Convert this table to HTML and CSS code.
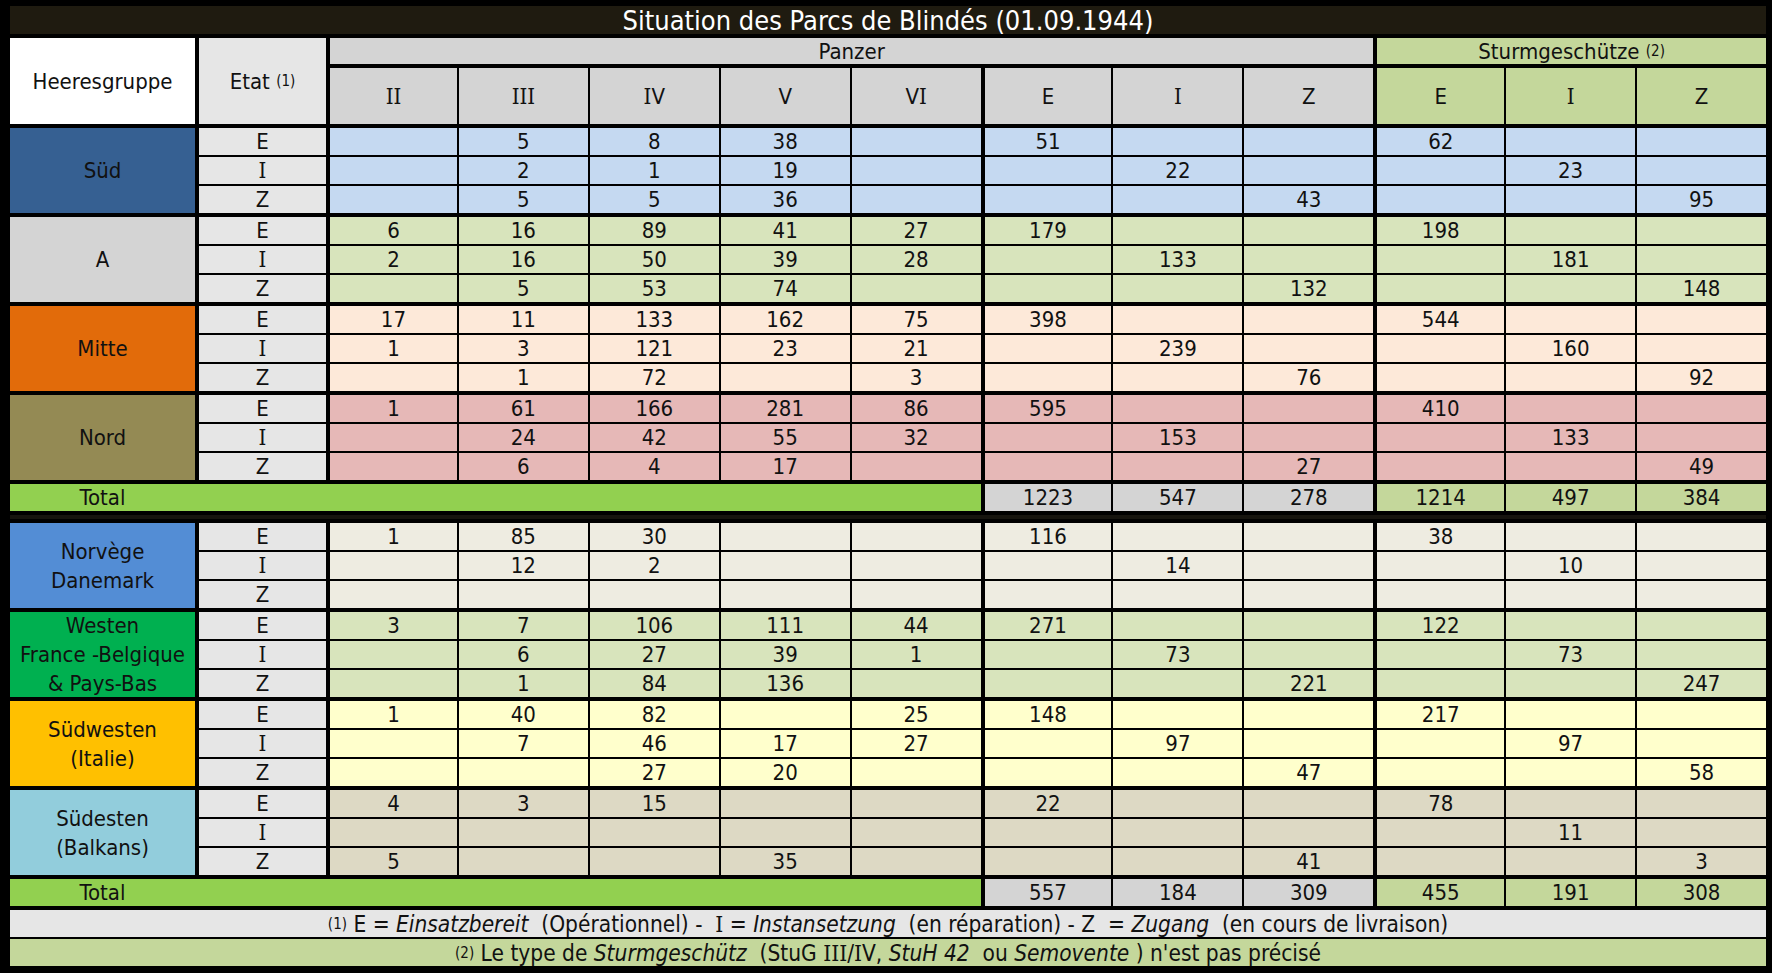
FILE: index.html
```html
<!DOCTYPE html>
<html lang="fr">
<head>
<meta charset="utf-8">
<title>Situation des Parcs de Blindés (01.09.1944)</title>
<link rel="stylesheet" href="styles.css">
</head>
<body>
<div class="sheet">
  <div class="title">Situation des Parcs de Blindés (01.09.1944)</div>

  <div class="grid head">
    <div class="hg">Heeresgruppe</div>
    <div class="etat-h tk">Etat&nbsp;<sup>(1)</sup></div>
    <div class="band-p tk">Panzer</div>
    <div class="band-s tk">Sturmgeschütze&nbsp;<sup>(2)</sup></div>
    <div class="sub-p tk"><span class="r">II</span></div>
    <div class="sub-p"><span class="r">III</span></div>
    <div class="sub-p"><span class="r">I</span>V</div>
    <div class="sub-p">V</div>
    <div class="sub-p">V<span class="r">I</span></div>
    <div class="sub-p tk">E</div>
    <div class="sub-p"><span class="r">I</span></div>
    <div class="sub-p">Z</div>
    <div class="sub-s tk">E</div>
    <div class="sub-s"><span class="r">I</span></div>
    <div class="sub-s">Z</div>
  </div>

  <div class="grid grp sud">
    <div class="lab">Süd</div>
    <div>E</div><div></div><div>5</div><div>8</div><div>38</div><div></div><div>51</div><div></div><div></div><div>62</div><div></div><div></div>
    <div class="r">I</div><div></div><div>2</div><div>1</div><div>19</div><div></div><div></div><div>22</div><div></div><div></div><div>23</div><div></div>
    <div>Z</div><div></div><div>5</div><div>5</div><div>36</div><div></div><div></div><div></div><div>43</div><div></div><div></div><div>95</div>
  </div>

  <div class="grid grp ga">
    <div class="lab">A</div>
    <div>E</div><div>6</div><div>16</div><div>89</div><div>41</div><div>27</div><div>179</div><div></div><div></div><div>198</div><div></div><div></div>
    <div class="r">I</div><div>2</div><div>16</div><div>50</div><div>39</div><div>28</div><div></div><div>133</div><div></div><div></div><div>181</div><div></div>
    <div>Z</div><div></div><div>5</div><div>53</div><div>74</div><div></div><div></div><div></div><div>132</div><div></div><div></div><div>148</div>
  </div>

  <div class="grid grp mitte">
    <div class="lab">Mitte</div>
    <div>E</div><div>17</div><div>11</div><div>133</div><div>162</div><div>75</div><div>398</div><div></div><div></div><div>544</div><div></div><div></div>
    <div class="r">I</div><div>1</div><div>3</div><div>121</div><div>23</div><div>21</div><div></div><div>239</div><div></div><div></div><div>160</div><div></div>
    <div>Z</div><div></div><div>1</div><div>72</div><div></div><div>3</div><div></div><div></div><div>76</div><div></div><div></div><div>92</div>
  </div>

  <div class="grid grp nord">
    <div class="lab">Nord</div>
    <div>E</div><div>1</div><div>61</div><div>166</div><div>281</div><div>86</div><div>595</div><div></div><div></div><div>410</div><div></div><div></div>
    <div class="r">I</div><div></div><div>24</div><div>42</div><div>55</div><div>32</div><div></div><div>153</div><div></div><div></div><div>133</div><div></div>
    <div>Z</div><div></div><div>6</div><div>4</div><div>17</div><div></div><div></div><div></div><div>27</div><div></div><div></div><div>49</div>
  </div>

  <div class="grid tot">
    <div class="tl"><span>Total</span></div>
    <div class="tp tk">1223</div><div class="tp">547</div><div class="tp">278</div>
    <div class="ts tk">1214</div><div class="ts">497</div><div class="ts">384</div>
  </div>

  <div class="sep"></div>

  <div class="grid grp norv">
    <div class="lab">Norvège<br>Danemark</div>
    <div>E</div><div>1</div><div>85</div><div>30</div><div></div><div></div><div>116</div><div></div><div></div><div>38</div><div></div><div></div>
    <div class="r">I</div><div></div><div>12</div><div>2</div><div></div><div></div><div></div><div>14</div><div></div><div></div><div>10</div><div></div>
    <div>Z</div><div></div><div></div><div></div><div></div><div></div><div></div><div></div><div></div><div></div><div></div><div></div>
  </div>

  <div class="grid grp westen">
    <div class="lab">Westen<br>France -Belgique<br>&amp; Pays-Bas</div>
    <div>E</div><div>3</div><div>7</div><div>106</div><div>111</div><div>44</div><div>271</div><div></div><div></div><div>122</div><div></div><div></div>
    <div class="r">I</div><div></div><div>6</div><div>27</div><div>39</div><div>1</div><div></div><div>73</div><div></div><div></div><div>73</div><div></div>
    <div>Z</div><div></div><div>1</div><div>84</div><div>136</div><div></div><div></div><div></div><div>221</div><div></div><div></div><div>247</div>
  </div>

  <div class="grid grp sudw">
    <div class="lab">Südwesten<br>(Italie)</div>
    <div>E</div><div>1</div><div>40</div><div>82</div><div></div><div>25</div><div>148</div><div></div><div></div><div>217</div><div></div><div></div>
    <div class="r">I</div><div></div><div>7</div><div>46</div><div>17</div><div>27</div><div></div><div>97</div><div></div><div></div><div>97</div><div></div>
    <div>Z</div><div></div><div></div><div>27</div><div>20</div><div></div><div></div><div></div><div>47</div><div></div><div></div><div>58</div>
  </div>

  <div class="grid grp sudo">
    <div class="lab">Südesten<br>(Balkans)</div>
    <div>E</div><div>4</div><div>3</div><div>15</div><div></div><div></div><div>22</div><div></div><div></div><div>78</div><div></div><div></div>
    <div class="r">I</div><div></div><div></div><div></div><div></div><div></div><div></div><div></div><div></div><div></div><div>11</div><div></div>
    <div>Z</div><div>5</div><div></div><div></div><div>35</div><div></div><div></div><div></div><div>41</div><div></div><div></div><div>3</div>
  </div>

  <div class="grid tot">
    <div class="tl"><span>Total</span></div>
    <div class="tp tk">557</div><div class="tp">184</div><div class="tp">309</div>
    <div class="ts tk">455</div><div class="ts">191</div><div class="ts">308</div>
  </div>

  <div class="notes">
    <div class="note n1"><sup>(1)</sup> E = <i>Einsatzbereit</i>  (Opérationnel) -  <span class="r">I</span> = <i>Instansetzung</i>  (en réparation) - Z  = <i>Zugang</i>  (en cours de livraison)</div>
    <div class="note n2"><sup>(2)</sup> Le type de <i>Sturmgeschütz</i>  (StuG <span class="r">III</span>/<span class="r">I</span>V, <i>StuH 42</i>  ou <i>Semovente</i> ) n'est pas précisé</div>
  </div>
</div>
</body>
</html>
```

FILE: styles.css
```css
* { box-sizing: border-box; }

body {
  margin: 0;
  background: #000;
  font-family: "DejaVu Sans Condensed", "DejaVu Sans", Verdana, sans-serif;
  font-stretch: condensed;
  font-size: 22px;
  color: #111;
}

.sheet {
  width: 1772px;
  height: 973px;
  background: #000;
  padding: 6px 6px 7px 10px;
  display: flex;
  flex-direction: column;
  gap: 4px;
}

.title {
  height: 28px;
  background: #1f1b10;
  color: #fff;
  font-size: 27px;
  display: flex;
  align-items: center;
  justify-content: center;
}

/* capital I drawn with bars, as in the original typeface */
.r {
  font-family: "DejaVu Serif Condensed", "DejaVu Serif", serif;
  font-stretch: condensed;
}

sup {
  font-size: 15px;
  line-height: 0;
  vertical-align: 9px;
}

.grid {
  display: grid;
  grid-template-columns: 185px 129px repeat(11, minmax(0, 1fr));
  column-gap: 2px;
}

.tk { margin-left: 2px; }

/* header */
.head {
  grid-template-rows: 26px 56px;
  row-gap: 4px;
}
.head > div {
  display: flex;
  align-items: center;
  justify-content: center;
}
.hg { grid-row: 1 / 3; background: #fff; }
.etat-h { grid-row: 1 / 3; background: #e6e6e6; }
.band-p { grid-column: 3 / 11; background: #d4d4d4; }
.band-s { grid-column: 11 / 14; background: #c4d79b; }
.sub-p { background: #d4d4d4; }
.sub-s { background: #c4d79b; }

/* groups */
.grp {
  grid-template-rows: repeat(3, 27px);
  row-gap: 2px;
}
.grp > div {
  display: flex;
  align-items: center;
  justify-content: center;
  background: var(--d);
}
.grp > .lab {
  grid-row: 1 / 4;
  background: var(--l);
  text-align: center;
  line-height: 29px;
}
.grp > div:nth-child(12n+2) {
  background: #e6e6e6;
  margin-left: 2px;
}
.grp > div:nth-child(12n+3),
.grp > div:nth-child(12n+8),
.grp > div:nth-child(12n+11) {
  margin-left: 2px;
}

.sud    { --l: #366092; --d: #c5d9f1; }
.ga     { --l: #d4d4d4; --d: #d8e4bc; }
.mitte  { --l: #e26b0a; --d: #fde9d9; }
.nord   { --l: #948a54; --d: #e6b8b7; }
.norv   { --l: #538dd5; --d: #eeece1; }
.westen { --l: #00b050; --d: #d8e4bc; }
.sudw   { --l: #ffc000; --d: #ffffcc; }
.sudo   { --l: #92cddc; --d: #ddd9c4; }

/* totals */
.tot { grid-template-rows: 27px; }
.tot > div {
  display: flex;
  align-items: center;
  justify-content: center;
}
.tot > .tl {
  grid-column: 1 / 8;
  background: #92d050;
  justify-content: flex-start;
}
.tl span { width: 185px; text-align: center; }
.tp { background: #d4d4d4; }
.ts { background: #c4d79b; }

.sep {
  height: 4px;
  background: #16140e;
}

/* notes */
.notes {
  display: flex;
  flex-direction: column;
  gap: 2px;
}
.note {
  height: 27px;
  display: flex;
  align-items: center;
  justify-content: center;
  white-space: pre;
  font-size: 22.5px;
}
.n1 { background: #e6e6e6; }
.n2 { background: #c4d79b; }
```
